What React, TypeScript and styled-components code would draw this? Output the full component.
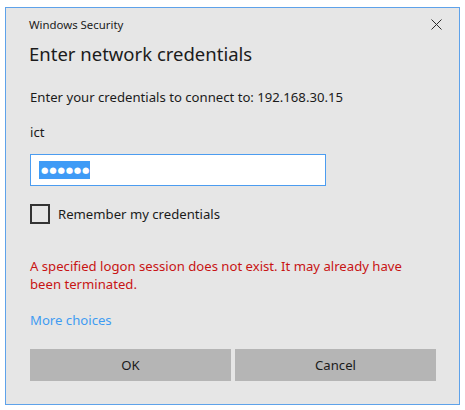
import React from 'react';
import styled, { createGlobalStyle } from 'styled-components';

const GlobalStyle = createGlobalStyle`
  body {
    margin: 0;
    background: #ffffff;
    font-family: 'Noto Sans', 'Liberation Sans', sans-serif;
  }
`;

const Window = styled.div`
  box-sizing: border-box;
  width: 455px;
  height: 398px;
  margin: 7px 0 0 5px;
  border: 1px solid #5ea2ea;
  background: #e6e6e6;
  padding: 0 23px 23px 24px;
  display: flex;
  flex-direction: column;
  color: #1b1b1b;
`;

const TitleBar = styled.div`
  height: 32px;
  display: flex;
  align-items: center;
  justify-content: space-between;
  margin-left: -1px;
  margin-right: -6px;
`;

const TitleText = styled.span`
  font-size: 11.4px;
`;

const CloseButton = styled.button`
  border: 0;
  background: transparent;
  padding: 0;
  width: 12px;
  height: 12px;
  display: flex;
  align-items: center;
  justify-content: center;
`;

const Heading = styled.h1`
  margin: 0;
  font-size: 18.5px;
  font-weight: 400;
  line-height: 28px;
  height: 28px;
  margin-left: -1px;
`;

const Text = styled.p<{ $top: number }>`
  margin: ${(p) => p.$top}px 0 0;
  font-size: 13.15px;
  line-height: 20px;
`;

const PasswordBox = styled.div`
  box-sizing: border-box;
  margin-top: 12px;
  width: 296px;
  height: 32px;
  border: 1px solid #4b9cf0;
  background: #ffffff;
  display: flex;
  align-items: center;
  padding-left: 8px;
`;

const Selected = styled.span`
  display: inline-flex;
  align-items: center;
  height: 18px;
  padding: 0 0 0 2px;
  background: #3f9bf6;
  color: #ffffff;
  font-size: 8.5px;
  letter-spacing: 0.8px;
  font-family: 'DejaVu Sans', sans-serif;
`;

const CheckRow = styled.label`
  margin-top: 18px;
  display: flex;
  align-items: center;
  gap: 8px;
  height: 20px;
  font-size: 13.15px;
`;

const Box = styled.span`
  box-sizing: border-box;
  width: 20px;
  height: 20px;
  border: 2px solid #333333;
`;

const ErrorText = styled.p`
  margin: 33px 0 0;
  font-size: 13.15px;
  line-height: 18px;
  color: #c81414;
`;

const Link = styled.a`
  margin-top: 17px;
  font-size: 13.15px;
  line-height: 20px;
  color: #3f9cf2;
  text-decoration: none;
  align-self: flex-start;
`;

const Buttons = styled.div`
  margin-top: 19px;
  display: grid;
  grid-template-columns: 1fr 1fr;
  gap: 4px;
`;

const Button = styled.button`
  height: 32px;
  border: 0;
  background: #b5b5b5;
  font-family: inherit;
  font-size: 13.15px;
  color: #1b1b1b;
  padding: 0;
`;

export default function App() {
  return (
    <>
      <GlobalStyle />
      <Window>
        <TitleBar>
          <TitleText>Windows Security</TitleText>
          <CloseButton aria-label="Close">
            <svg width="11" height="11" viewBox="0 0 11 11">
              <path d="M0.5 0.5L10.5 10.5M10.5 0.5L0.5 10.5" stroke="#2b2b2b" strokeWidth="1" />
            </svg>
          </CloseButton>
        </TitleBar>
        <Heading>Enter network credentials</Heading>
        <Text $top={19}>Enter your credentials to connect to: 192.168.30.15</Text>
        <Text $top={15}>ict</Text>
        <PasswordBox>
          <Selected>●●●●●●</Selected>
        </PasswordBox>
        <CheckRow>
          <Box />
          Remember my credentials
        </CheckRow>
        <ErrorText>
          A specified logon session does not exist. It may already have
          <br />
          been terminated.
        </ErrorText>
        <Link href="#">More choices</Link>
        <Buttons>
          <Button>OK</Button>
          <Button>Cancel</Button>
        </Buttons>
      </Window>
    </>
  );
}
